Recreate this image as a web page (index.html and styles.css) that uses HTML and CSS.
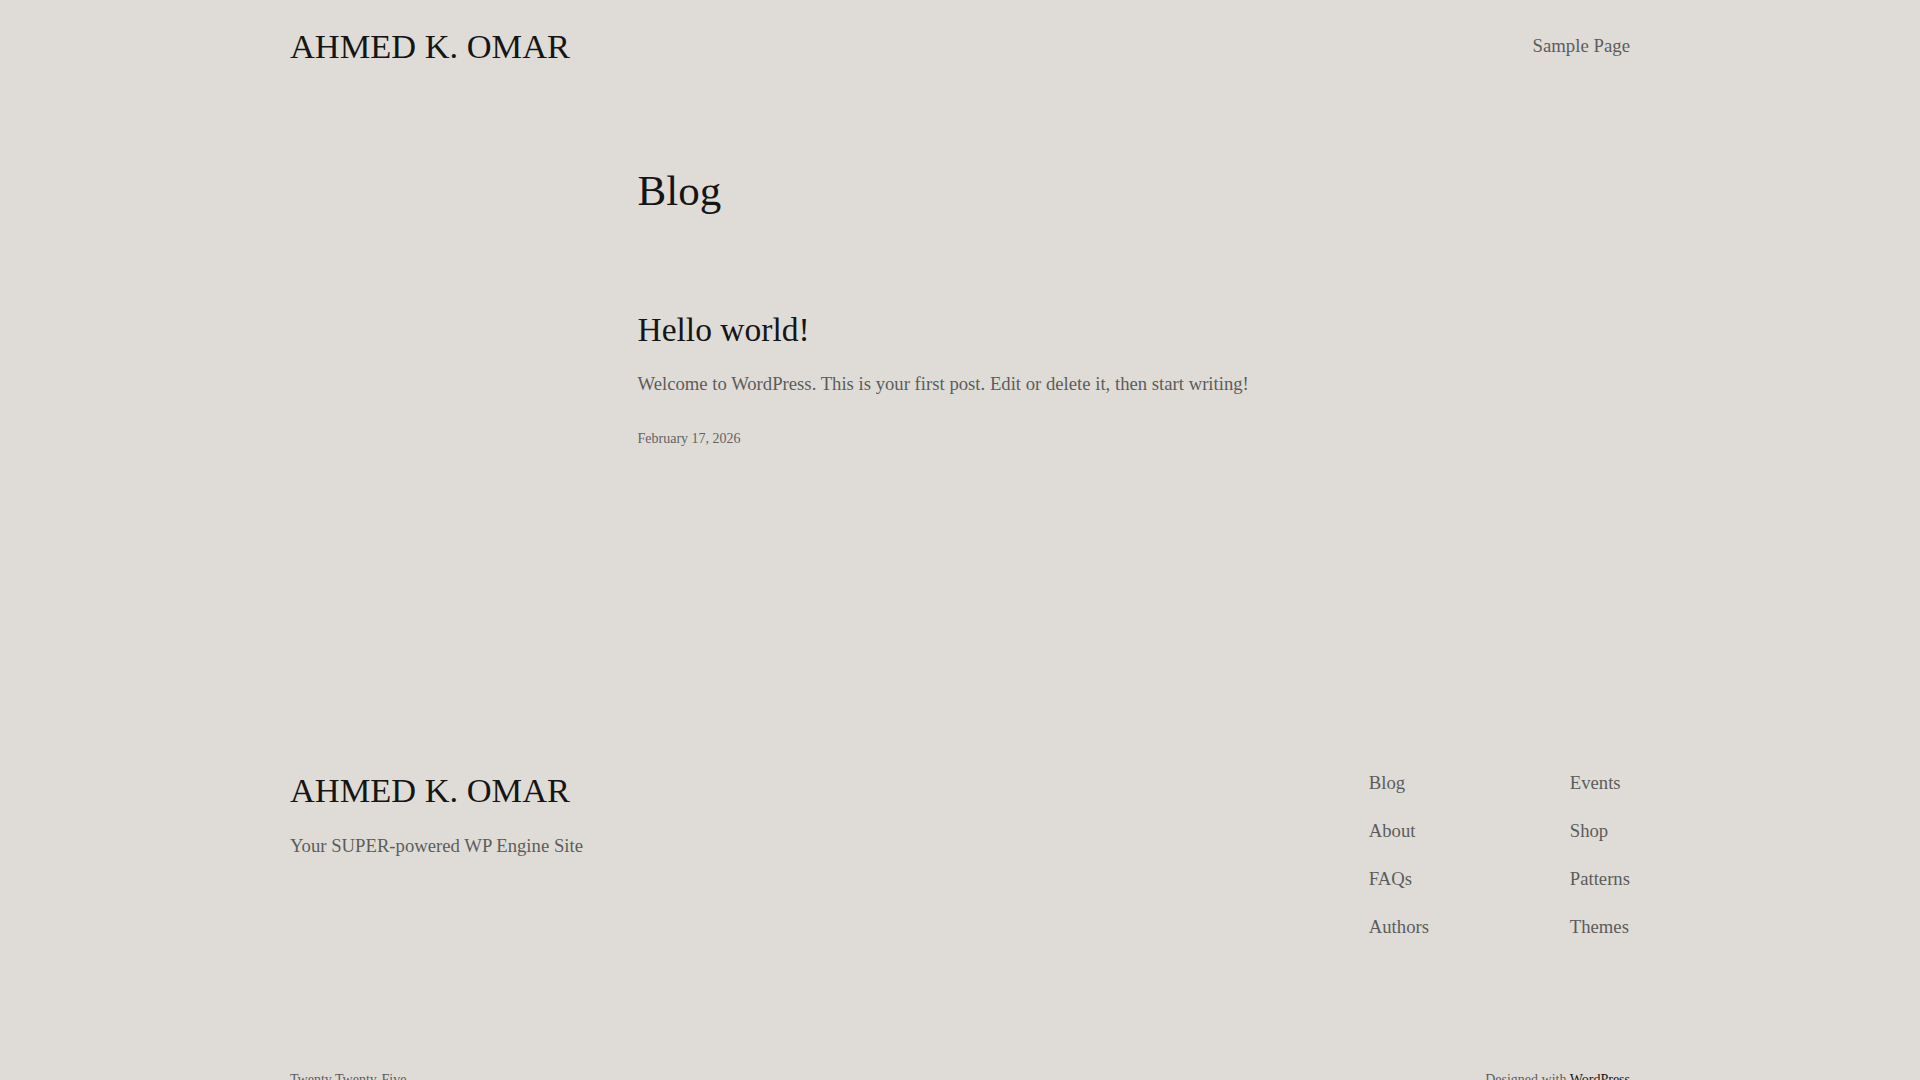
FILE: index.html
```html
<!DOCTYPE html>
<html lang="en">
<head>
<meta charset="utf-8">
<title>Blog – AHMED K. OMAR</title>
<link rel="stylesheet" href="styles.css">
</head>
<body>
<header class="site-header">
  <div class="wide">
    <a class="site-title" href="#">AHMED K. OMAR</a>
    <nav class="top-nav"><a href="#">Sample Page</a></nav>
  </div>
</header>

<main class="site-main">
  <div class="content">
    <h1 class="page-title">Blog</h1>
    <article class="post">
      <h2 class="post-title"><a href="#">Hello world!</a></h2>
      <p class="excerpt">Welcome to WordPress. This is your first post. Edit or delete it, then start writing!</p>
      <div class="post-date">February 17, 2026</div>
    </article>
  </div>
</main>

<footer class="site-footer">
  <div class="wide footer-top">
    <div class="footer-brand">
      <a class="site-title" href="#">AHMED K. OMAR</a>
      <p class="tagline">Your SUPER-powered WP Engine Site</p>
    </div>
    <nav class="footer-nav">
      <ul class="footer-col">
        <li><a href="#">Blog</a></li>
        <li><a href="#">About</a></li>
        <li><a href="#">FAQs</a></li>
        <li><a href="#">Authors</a></li>
      </ul>
      <ul class="footer-col">
        <li><a href="#">Events</a></li>
        <li><a href="#">Shop</a></li>
        <li><a href="#">Patterns</a></li>
        <li><a href="#">Themes</a></li>
      </ul>
    </nav>
  </div>
  <div class="wide footer-bottom">
    <span class="credit">Twenty Twenty-Five</span>
    <span class="credit">Designed with <a href="#">WordPress</a></span>
  </div>
</footer>
</body>
</html>
```
FILE: styles.css
```css
html, body {
  margin: 0;
  padding: 0;
}

body {
  background: #dfdcd7;
  color: #5c5c5c;
  font-family: "Liberation Serif", "Times New Roman", serif;
  font-size: 18.7px;
  line-height: 1.6;
  overflow: hidden;
  height: 1080px;
}

a {
  color: inherit;
  text-decoration: none;
}

.wide {
  width: 1340px;
  margin: 0 auto;
}

/* header */
.site-header {
  padding: 21.8px 0 21px;
}

.site-header .wide {
  display: flex;
  justify-content: space-between;
  align-items: center;
}

.site-title {
  display: block;
  color: #151515;
  font-size: 34.4px;
  line-height: 1.4;
}

.top-nav {
  font-size: 18.8px;
  line-height: 1.4;
  color: #5c5c5c;
}

/* main */
.site-main {
  padding-top: 74.2px;
}

.content {
  width: 645px;
  margin: 0 auto;
}

.page-title {
  margin: 0;
  font-weight: 400;
  font-size: 43px;
  line-height: 1.2;
  color: #151515;
}

.post-title {
  margin: 93.4px 0 0;
  font-weight: 400;
  font-size: 33.5px;
  line-height: 1.2;
  color: #151515;
}

.excerpt {
  margin: 18.2px 0 0;
}

.post-date {
  margin-top: 31px;
  font-size: 14px;
  line-height: 1.4;
  color: #636363;
}

/* footer */
.site-footer {
  padding-top: 317px;
}

.footer-top {
  display: flex;
  justify-content: space-between;
  align-items: flex-start;
}

.tagline {
  margin: 16.5px 0 0;
}

.footer-nav {
  display: grid;
  grid-template-columns: 201px auto;
  padding-top: 1.65px;
}

.footer-col {
  list-style: none;
  margin: 0;
  padding: 0;
  display: flex;
  flex-direction: column;
  gap: 18.1px;
}

.footer-bottom {
  display: flex;
  justify-content: space-between;
  margin-top: 127.9px;
  font-size: 14px;
  line-height: 1.4;
}

.credit a {
  color: #151515;
}
```
